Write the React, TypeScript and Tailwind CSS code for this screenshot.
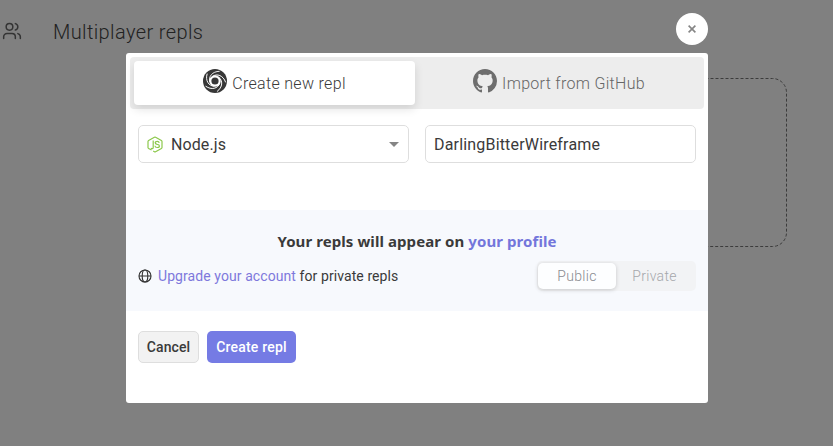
import React from "react";
import { Users } from "lucide-react";

function SwirlLogo() {
  return (
    <svg viewBox="0 0 24 24" className="size-6 shrink-0">
      <circle cx="12" cy="12" r="12" fill="#373737" />
      <circle cx="12" cy="12" r="4.7" fill="none" stroke="#fff" strokeWidth="2.2" />
      {[0, 72, 144, 216, 288].map((angle) => (
        <path
          key={angle}
          d="M6.8 13C5.2 7.6 9.3 2.4 16.6 2.3"
          fill="none"
          stroke="#fff"
          strokeWidth="0.9"
          transform={`rotate(${angle} 12 12)`}
        />
      ))}
    </svg>
  );
}

function GitHubLogo() {
  return (
    <svg viewBox="0 0 16 16" className="size-6 shrink-0" fill="#6e6e6e">
      <path d="M8 0C3.58 0 0 3.58 0 8c0 3.54 2.29 6.53 5.47 7.59.4.07.55-.17.55-.38 0-.19-.01-.82-.01-1.49-2.01.37-2.53-.49-2.69-.94-.09-.23-.48-.94-.82-1.13-.28-.15-.68-.52-.01-.53.63-.01 1.08.58 1.23.82.72 1.21 1.87.87 2.33.66.07-.52.28-.87.51-1.07-1.78-.2-3.64-.89-3.64-3.95 0-.87.31-1.59.82-2.15-.08-.2-.36-1.02.08-2.12 0 0 .67-.21 2.2.82.64-.18 1.32-.27 2-.27s1.36.09 2 .27c1.53-1.04 2.2-.82 2.2-.82.44 1.1.16 1.92.08 2.12.51.56.82 1.27.82 2.15 0 3.07-1.87 3.75-3.65 3.95.29.25.54.73.54 1.48 0 1.07-.01 1.93-.01 2.2 0 .21.15.46.55.38A8.01 8.01 0 0 0 16 8c0-4.42-3.58-8-8-8z" />
    </svg>
  );
}

function NodeLogo() {
  return (
    <svg viewBox="0 0 16 17" className="h-[17px] w-4 shrink-0" fill="none" stroke="#8cc84b" strokeWidth="1.2" strokeLinejoin="round">
      <path d="M4.6 14.1 1.6 12.4Q1 12 1 11.4V5.6Q1 5 1.6 4.6L7.4 1.3Q8 1 8.6 1.3L14.4 4.6Q15 5 15 5.6v5.8q0 .6-.6 1L8.6 15.7Q8 16 7.4 15.7L6.2 15" />
      <path d="M6.2 4.6v6.8q0 1.6-1.7 1.2L3.8 12.2M12.2 6.8Q12 5.3 10.2 5.3 8.2 5.3 8.2 6.8q0 1.2 2 1.5 2.2.2 2.2 1.6 0 1.6-2.2 1.6-2.1 0-2.3-1.7" />
    </svg>
  );
}

function Globe() {
  return (
    <svg viewBox="0 0 14 14" className="size-3.5 shrink-0" fill="none" stroke="#333" strokeWidth="1.15">
      <circle cx="7" cy="7" r="6" />
      <ellipse cx="7" cy="7" rx="2.8" ry="6" />
      <path d="M1 7h12" />
    </svg>
  );
}

export default function App() {
  return (
    <div className="relative h-[446px] w-[833px] overflow-hidden bg-[#808080] font-['Roboto','Noto_Sans',sans-serif] text-[#3a3a3a]">
      <header className="flex h-16 items-center pl-[2px]">
        <Users size={20} strokeWidth={1.8} className="-mt-[2px] text-[#343434]" />
        <h1 className="ml-[31px] text-[20px] font-light tracking-[0.38px] text-[#222]">Multiplayer repls</h1>
      </header>
      <svg className="ml-[626px] mt-[13px] h-[172px] w-[164px]" fill="none">
        <rect x="0.5" y="1.5" width="160" height="168" rx="14" stroke="#3c3c3c" strokeDasharray="3 2" />
      </svg>

      <button aria-label="Close" className="absolute left-[676px] top-[13px] flex size-8 items-center justify-center rounded-full bg-white">
        <svg viewBox="0 0 8 8" className="size-2" stroke="#858585" strokeWidth="1.6">
          <path d="m.6.6 6.8 6.8M7.4.6.6 7.4" />
        </svg>
      </button>

      <main className="absolute left-[126px] top-[53px] h-[350px] w-[582px] overflow-hidden rounded-[3px] bg-white">
        <div className="mx-1 mt-1 flex h-[52px] rounded-[4px] bg-[#ededed] p-1 text-[16px] font-light">
          <button className="flex w-[281px] items-center justify-center gap-[5px] rounded-[4px] bg-white shadow-[0_4px_10px_rgba(0,0,0,0.12)]">
            <span className="-mt-1"><SwirlLogo /></span>
            <span className="pt-0.5 tracking-[0.32px]">Create new repl</span>
          </button>
          <button className="flex flex-1 items-center justify-center gap-[5px] pl-[3px] text-[#666]">
            <span className="-mt-1"><GitHubLogo /></span>
            <span className="pt-0.5 tracking-[0.3px]">Import from GitHub</span>
          </button>
        </div>

        <div className="mx-3 mt-4 flex gap-4 text-[16px]">
          <div className="flex h-[38px] w-[271px] items-center rounded-[5px] border border-[#dedede] px-2">
            <NodeLogo />
            <span className="ml-2 pt-0.5 tracking-[0.1px]">Node.js</span>
            <span className="ml-auto mr-px border-x-[5px] border-t-[5px] border-x-transparent border-t-[#858585]" />
          </div>
          <div className="flex h-[38px] w-[271px] items-center rounded-[5px] border border-[#dedede] px-2">
            <span className="pt-0.5 tracking-[0.18px]">DarlingBitterWireframe</span>
          </div>
        </div>

        <section className="mt-[47px] h-[101px] bg-[#f7f9fd] px-3 pt-[19px]">
          <h2 className="text-center font-['Noto_Sans',sans-serif] text-[15px] font-bold leading-6 tracking-[0.08px]">
            Your repls will appear on <span className="text-[#7376db]">your profile</span>
          </h2>
          <div className="mt-2 flex h-[30px] items-center text-[14px]">
            <Globe />
            <span className="ml-[6px] tracking-[0.08px]"><span className="text-[#7e78dc]">Upgrade your account</span> for private repls</span>
            <div className="ml-auto flex h-[30px] w-[159px] rounded-[5px] bg-[#f2f3f5] py-0.5 pl-px font-light text-[#a5a7ab]">
              <span className="flex w-[78px] items-center justify-center rounded-[5px] bg-[#fdfeff] tracking-[0.3px] text-[#888b90] shadow-[0_1px_4px_rgba(0,0,0,0.18)]">Public</span>
              <span className="flex flex-1 items-center justify-center pr-[3px] tracking-[0.3px]">Private</span>
            </div>
          </div>
        </section>

        <div className="ml-3 mt-5 flex h-8 gap-2 text-[14px] font-medium">
          <button className="w-[61px] rounded-[5px] border border-[#dedede] bg-[#f2f2f2] tracking-[0.1px]">Cancel</button>
          <button className="w-[89px] rounded-[5px] bg-[#757be4] tracking-[0.2px] text-white">Create repl</button>
        </div>
      </main>
    </div>
  );
}
